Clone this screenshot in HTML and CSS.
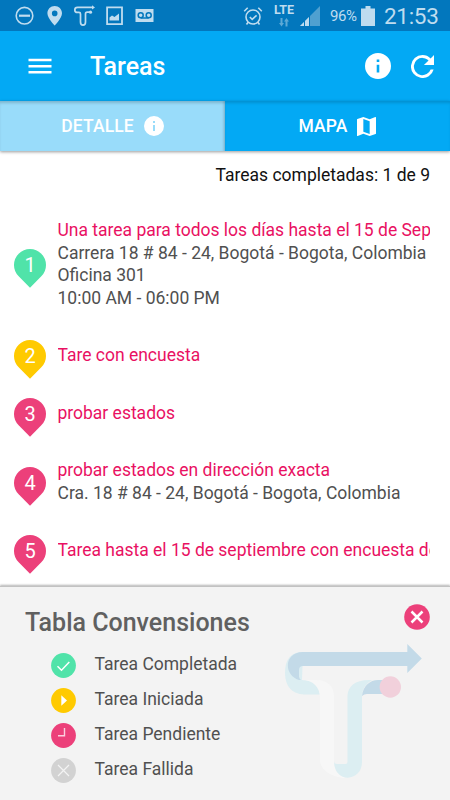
FILE: index.html
```html
<!DOCTYPE html>
<html lang="es">
<head>
<meta charset="utf-8">
<title>Tareas</title>
<link rel="stylesheet" href="styles.css">
</head>
<body>
<div class="app">
  <header class="status">
    <svg class="status-left" width="160" height="31" viewBox="0 0 160 31">
      <g fill="none" stroke="#bfdcef" stroke-width="1.6">
        <circle cx="24.5" cy="15.7" r="8.3"/><path d="M19 15.7h11" stroke-width="2.2"/>
      </g>
      <path fill="#bfdcef" fill-rule="evenodd" d="M54.700 6c-4.100 0-7.300 3.200-7.300 7.200 0 5 7.300 12.300 7.300 12.300s7.300-7.300 7.300-12.300c0-4-3.200-7.200-7.300-7.200zm0 4.600a2.800 2.800 0 1 1 0 5.600 2.800 2.800 0 0 1 0-5.600z"/>
      <path fill="none" stroke="#bfdcef" stroke-width="1.700" d="M92 7.400H77.500q-2.700 0-2.700 2.500t2.700 2.500h1.500q1.500 0 1.500 1.500v8q0 3.200 2.500 3.200t2.500-3.200v-8q0-1.700 1.700-1.700H90"/>
      <path fill="#bfdcef" d="M92 5.200l3 2.200-3 2.200z"/><circle cx="90.500" cy="12.200" r="1.600" fill="#bfdcef"/>
      <path fill="none" stroke="#bfdcef" stroke-width="1.800" d="M107.100 7.400h14.900v16.800h-14.900z"/>
      <path fill="#bfdcef" d="M109.500 20.500v-3l2.500-2 2.500 1.500 4.500-3.500v7z"/>
      <path fill="#bfdcef" d="M135.500 9h18v13h-18z"/>
      <g fill="none" stroke="#0277bd" stroke-width="1.500"><circle cx="140.700" cy="15.300" r="2.500"/><circle cx="148.700" cy="15.300" r="2.500"/><path d="M140.700 18h8"/></g>
    </svg>
    <div class="status-right">
      <svg width="20" height="20" viewBox="0 0 20 20" fill="none" stroke="#bfdcef" stroke-width="1.600"><circle cx="10" cy="11" r="7"/><path d="M6.800 11l2.400 2.400 4.400-4M1.200 5.200l3.500-3.400M18.800 5.200l-3.500-3.400M5.300 16l-1.800 2.500M14.700 16l1.800 2.500"/></svg>
      <div class="net"><span class="lte">LTE</span>
        <svg width="10" height="9" viewBox="0 0 10 9" fill="#5da9d6"><path d="M1.500 0h2v5H5L2.500 8.500 0 5h1.500zM6.500 8.500h2v-5H10L7.500 0 5 3.500h1.500z"/></svg></div>
      <svg class="signal" width="20" height="20" viewBox="0 0 20 20"><path fill="#4fa0d0" d="M0 20L20 0v20z"/><path fill="#bfdcef" d="M0 20l4-4v4zM5 20v-5l4-4v9z"/><path stroke="#0277bd" d="M4.500 14v6M9.500 9v11"/></svg>
      <span class="percent">96%</span>
      <svg class="battery" width="14" height="20" viewBox="0 0 14 20" fill="#bfdcef"><path d="M4.500 0h5v2.500H14V20H0V2.500h4.500z"/></svg>
      <span class="clock">21:53</span>
    </div>
  </header>

  <div class="toolbar">
    <svg class="menu" width="24" height="16" viewBox="0 0 24 16"><path stroke="#fff" stroke-width="2.500" d="M.5 2h23M.5 8.200h23M.5 14.300h23"/></svg>
    <h1>Tareas</h1>
    <svg class="info" width="26" height="26" viewBox="2 2 20 20"><path fill="#fff" d="M12 2a10 10 0 1 0 0 20 10 10 0 0 0 0-20zm1 15h-2v-6h2zm0-8h-2V7h2z"/></svg>
    <svg class="refresh" width="23" height="23" viewBox="4 4 16 16"><path fill="#fff" d="M17.650 6.350A7.960 7.960 0 0 0 12 4a8 8 0 1 0 7.730 10h-2.080A6 6 0 1 1 12 6c1.660 0 3.140.69 4.220 1.780L13 11h7V4z"/></svg>
  </div>

  <nav class="tabs">
    <div class="tab tab-active"><span>DETALLE</span><svg width="20" height="20" viewBox="2 2 20 20"><path fill="#fff" d="M12 2a10 10 0 1 0 0 20 10 10 0 0 0 0-20zm1 15h-2v-6h2zm0-8h-2V7h2z"/></svg></div>
    <div class="tab"><span>MAPA</span><svg width="19" height="19" viewBox="3 3 18 18"><path fill="#fff" d="M20.500 3l-.16.030L15 5.100 9 3 3.360 4.900c-.21.070-.36.250-.36.480V20.500c0 .28.220.5.500.5l.16-.030L9 18.900l6 2.100 5.640-1.900c.21-.070.36-.250.36-.480V3.500c0-.28-.22-.5-.5-.5zM15 19l-6-2.110V5l6 2.110z"/></svg></div>
  </nav>

  <main class="content">
    <p class="summary">Tareas completadas: 1 de 9</p>
    <ul class="tasks">
      <li class="task"><div class="pin done"><span>1</span></div><div class="task-text"><b>Una tarea para todos los días hasta el 15 de Sep</b><span>Carrera 18 # 84 - 24, Bogotá - Bogota, Colombia</span><span>Oficina 301</span><span>10:00 AM - 06:00 PM</span></div></li>
      <li class="task"><div class="pin started"><span>2</span></div><div class="task-text"><b>Tare con encuesta</b></div></li>
      <li class="task"><div class="pin pending"><span>3</span></div><div class="task-text"><b>probar estados</b></div></li>
      <li class="task"><div class="pin pending"><span>4</span></div><div class="task-text"><b>probar estados en dirección exacta</b><span>Cra. 18 # 84 - 24, Bogotá - Bogota, Colombia</span></div></li>
      <li class="task"><div class="pin pending"><span>5</span></div><div class="task-text"><b>Tarea hasta el 15 de septiembre con encuesta de</b></div></li>
    </ul>
  </main>

  <section class="legend">
    <div class="legend-head">
      <h2>Tabla Convensiones</h2>
      <svg class="close" width="26" height="26" viewBox="0 0 26 26"><circle cx="13" cy="13" r="12.800" fill="#ec407a"/><path stroke="#fff" stroke-width="2.500" d="M7.500 7.500l11 11M18.500 7.500l-11 11"/></svg>
    </div>
    <div class="legend-body">
      <ul class="legend-list">
        <li><svg width="25" height="25" viewBox="0 0 25 25"><circle cx="12.500" cy="12.500" r="12.400" fill="#50e3a9"/><path fill="none" stroke="#fff" stroke-width="1.500" d="M6.500 13.200l4 4 7.800-8.200"/></svg><span>Tarea Completada</span></li>
        <li><svg width="25" height="25" viewBox="0 0 25 25"><circle cx="12.500" cy="12.500" r="12.400" fill="#ffca00"/><path fill="#fff" d="M10.300 7.300l5.700 5.200-5.700 5.200z"/></svg><span>Tarea Iniciada</span></li>
        <li><svg width="25" height="25" viewBox="0 0 25 25"><circle cx="12.500" cy="12.500" r="12.400" fill="#ec407a"/><path fill="none" stroke="#fbd0df" stroke-width="1.400" d="M13.500 5v7.800H7"/></svg><span>Tarea Pendiente</span></li>
        <li><svg width="25" height="25" viewBox="0 0 25 25"><circle cx="12.500" cy="12.500" r="12.400" fill="#d2d2d2"/><path stroke="#f3f3f3" stroke-width="1.200" d="M7 7l11 11M18 7L7 18"/></svg><span>Tarea Fallida</span></li>
      </ul>
      <svg class="logo" width="138" height="136" viewBox="284 642 138 136">
        <path fill="#dceef2" d="M303 651c-12 0-18 7-18 21 0 13 7 21 19 21.500h16c0-9-7-14.500-18-14.500z"/>
        <path fill="#c3dae8" d="M407.300 651H303c-19 0-20 23-4 28l2-.3q-2-1-2-3v-6.700q0-4 4-4h104.300v7l14.500-14.500-14.500-14.500z"/>
        <path fill="#f7f7f7" d="M302 679h14c11 0 18 6 18 16v64c0 9 5 16 12 18-12 0-26-7-26-18v-62c0-11-7-18-18-18z"/>
        <path fill="#dceef2" d="M334 760c0 23 28 21 28 1v-66q0-10 10-16c-16-1-24.500 6-24.500 16v66q0 2-2 2h-8.500q-3 0-3-3z"/>
        <path fill="#c3dae8" d="M390 679h-12c-8 0-15 6-16 16q2-2 5-2h23z"/>
        <circle cx="390.300" cy="686" r="10.700" fill="#f1d0db"/>
      </svg>
    </div>
  </section>
</div>
</body>
</html>
```
FILE: styles.css
```css
* { box-sizing: border-box; }
body { margin: 0; background: #fff; font-family: Roboto, sans-serif; }
h1, h2, p, ul { margin: 0; padding: 0; }
ul { list-style: none; }
svg { display: block; flex: none; }
.app { width: 450px; height: 800px; overflow: hidden; display: flex; flex-direction: column; }

.status { height: 31px; flex: none; background: #0277bd; color: #bfdcef; display: flex; justify-content: space-between; }
.status-right { display: flex; align-items: center; padding-right: 12px; }
.net { width: 22px; height: 22px; margin-left: 10px; display: flex; flex-direction: column; align-items: center; }
.lte { font-size: 12.5px; line-height: 10px; font-weight: 700; margin-bottom: 3px; }
.signal { margin-left: 5px; }
.percent { font-size: 15px; letter-spacing: -0.4px; width: 28px; margin-left: 10px; padding-top: 1px; }
.battery { margin-left: 3px; }
.clock { font-size: 22.5px; letter-spacing: -0.3px; line-height: 31px; margin-left: 9px; width: 54px; white-space: nowrap; padding-top: 2px; }

.toolbar { height: 70px; flex: none; background: #03a9f4; color: #fff; display: flex; align-items: center; padding: 0 16px 0 28px; }
.toolbar h1 { font-size: 25px; font-weight: 500; letter-spacing: 0; margin-left: 38px; padding-top: 1px; flex: 1; }
.refresh { margin-left: 20px; }

.tabs { height: 50px; flex: none; display: flex; box-shadow: 0 1px 3px rgba(0, 0, 0, 0.4); }
.tab { flex: 1; display: flex; align-items: center; justify-content: center; gap: 10px; background: #03a9f4; color: #fff; font-size: 17.5px; font-weight: 500; letter-spacing: 0.1px; box-shadow: inset 0 3px 3px -1px rgba(0, 0, 0, 0.15); }
.tab span { margin-top: -1px; }
.tab-active { background: #99dcfa; box-shadow: inset 0 3px 3px -1px rgba(0, 0, 0, 0.18), inset -3px 0 3px -2px rgba(0, 0, 0, 0.2); }

.content { flex: none; height: 435px; overflow: hidden; padding: 13px 20px 0 14px; font-size: 17.5px; line-height: 22.5px; }
.summary { text-align: right; color: #111; margin-bottom: 15px; }
.task { display: flex; align-items: center; gap: 11.5px; padding: 17.5px 0; }
.task-text { flex: 1; min-width: 0; overflow: hidden; white-space: nowrap; color: #505050; }
.task-text b, .task-text span { display: block; }
.task-text b { font-weight: 400; color: #e91162; letter-spacing: -0.01px; }
.pin { position: relative; width: 32px; height: 32px; margin: -5px 0 -7px; flex: none; z-index: 0; color: #fff; font-size: 20px; line-height: 32px; text-align: center; }
.pin::before { content: ""; position: absolute; z-index: -1; inset: 0; border-radius: 50% 50% 0 50%; transform: rotate(45deg); }
.done::before { background: #50e3a9; }
.started::before { background: #ffca00; }
.pending::before { background: #ec407a; }

.legend { flex: 1; background: #f3f3f3; border-top: 1px solid #c2c2c2; box-shadow: 0 -1px 2px rgba(0, 0, 0, 0.3); padding: 17px 20px 0 25px; color: #505050; position: relative; }
.legend-head { display: flex; justify-content: space-between; align-items: flex-start; height: 38px; }
.legend h2 { font-size: 25px; line-height: 38px; font-weight: 500; color: #606060; }
.legend-body { display: flex; justify-content: space-between; padding: 0 8px 0 26px; }
.legend-list { padding-top: 4px; }
.legend-list li { display: flex; height: 35px; align-items: center; gap: 18.5px; font-size: 17.5px; }
.legend-list svg { margin-top: 4px; }
.logo { margin-top: 1px; }
```
